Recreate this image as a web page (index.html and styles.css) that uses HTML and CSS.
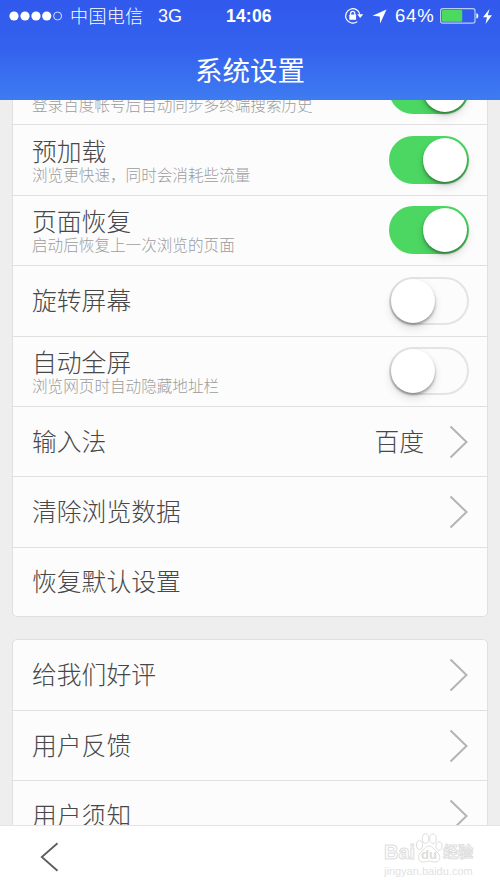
FILE: index.html
```html
<!DOCTYPE html>
<html lang="zh-CN">
<head>
<meta charset="utf-8">
<title>系统设置</title>
<link rel="stylesheet" href="styles.css">
</head>
<body>
<svg class="defs" aria-hidden="true">
  <symbol id="next" viewBox="0 0 20 34"><path d="M1.5 1.5 17.5 17 1.5 32.5" fill="none" stroke="#b4b4b4" stroke-width="2"/></symbol>
</svg>
<header class="header">
  <div class="status">
    <svg class="signal" width="54" height="12" viewBox="0 0 54 12" fill="#fff"><circle cx="5" cy="6" r="4.6"/><circle cx="16" cy="6" r="4.6"/><circle cx="27" cy="6" r="4.6"/><circle cx="37.7" cy="6" r="4.6"/><circle cx="48.6" cy="6" r="4" fill="none" stroke="#d5e0ff" stroke-width="1"/></svg>
    <span class="carrier">中国电信</span>
    <span class="network">3G</span>
    <span class="time">14:06</span>
    <svg class="lock" width="20" height="18" viewBox="0 0 20 18" fill="none" stroke="#fff"><path d="M13.3 14.6A7.2 7.2 0 1 1 15.9 7.5" stroke-width="1.2"/><path d="M13.2 7.3h6L16.2 11z" fill="#fff" stroke="none"/><path d="M6.6 8V6.5a2.1 2.1 0 0 1 4.2 0V8" stroke-width="1.2"/><rect x="5.3" y="7.6" width="6.8" height="5.2" rx=".6" fill="#fff" stroke="none"/></svg>
    <svg class="location" width="15" height="15" viewBox="0 0 15 15" fill="#fff"><path d="M14.5.5 8.2 14.5 7.7 7.4.5 6.8z"/></svg>
    <span class="percent">64%</span>
    <svg class="battery" width="39" height="16" viewBox="0 0 39 16"><rect x=".6" y=".6" width="34.4" height="14.6" rx="2.2" fill="none" stroke="#b9cbfb" stroke-width="1.2"/><rect x="2" y="2" width="20.2" height="11.8" rx="1" fill="#4cd95f"/><path d="M36.4 5.2c2.6.4 2.6 5 0 5.4z" fill="#fff"/></svg>
    <svg class="bolt" width="9" height="15" viewBox="0 0 9 15" fill="#fff"><path d="M6.5 0 0 8.3h4L2.5 15 9 6.3H4.8z"/></svg>
  </div>
  <h1 class="title">系统设置</h1>
</header>
<main class="content">
  <section class="card first">
    <div class="row"><div class="label sync"><small>登录百度帐号后自动同步多终端搜索历史</small></div><i class="switch on"></i></div>
    <div class="row"><div class="label"><b>预加载</b><small>浏览更快速，同时会消耗些流量</small></div><i class="switch on"></i></div>
    <div class="row"><div class="label"><b>页面恢复</b><small>启动后恢复上一次浏览的页面</small></div><i class="switch on"></i></div>
    <div class="row"><div class="label"><b>旋转屏幕</b></div><i class="switch"></i></div>
    <div class="row"><div class="label"><b>自动全屏</b><small>浏览网页时自动隐藏地址栏</small></div><i class="switch"></i></div>
    <div class="row"><div class="label"><b>输入法</b></div><span class="value">百度</span><svg class="next"><use href="#next"/></svg></div>
    <div class="row"><div class="label"><b>清除浏览数据</b></div><svg class="next"><use href="#next"/></svg></div>
    <div class="row"><div class="label"><b>恢复默认设置</b></div></div>
  </section>
  <section class="card">
    <div class="row"><div class="label"><b>给我们好评</b></div><svg class="next"><use href="#next"/></svg></div>
    <div class="row"><div class="label"><b>用户反馈</b></div><svg class="next"><use href="#next"/></svg></div>
    <div class="row"><div class="label"><b>用户须知</b></div><svg class="next"><use href="#next"/></svg></div>
  </section>
</main>
<footer class="toolbar">
  <svg width="19" height="30" viewBox="0 0 19 30" fill="none" stroke="#5c5c5c" stroke-width="1.8"><path d="M17.5 1.2 1.8 15 17.5 28.8"/></svg>
  <div class="watermark">
    <div class="brand"><span>Bai</span><svg width="28" height="31" viewBox="0 0 28 31" fill="#fff" stroke="#dedede"><ellipse cx="4.5" cy="12" rx="3" ry="4.4"/><ellipse cx="10.5" cy="5.5" rx="3.2" ry="4.8"/><ellipse cx="18" cy="5.7" rx="3.2" ry="4.8"/><ellipse cx="24" cy="13" rx="3" ry="4.2"/><path d="M14 13c-4 0-5 4-8 6-4 3-3 10 2 10 3 0 4-1 6-1s3 1 6 1c6 0 6-7 2-10-3-2-4-6-8-6z"/><text x="14" y="26" text-anchor="middle">du</text></svg><span class="cn">经验</span></div>
    <div class="site">jingyan.baidu.com</div>
  </div>
</footer>
</body>
</html>
```
FILE: styles.css
```css
* { box-sizing: border-box; }
body {
  margin: 0;
  width: 500px;
  height: 888px;
  display: flex;
  flex-direction: column;
  overflow: hidden;
  background: #eee;
  color: #484848;
  font-family: "Liberation Sans", "Noto Sans CJK SC", sans-serif;
}
.defs { display: none; }
.header {
  flex: none;
  height: 100px;
  background: linear-gradient(#3159ed, #3462ee 50%, #3e7bf1);
  color: #fff;
}
.status {
  display: flex;
  align-items: center;
  height: 32px;
  padding-left: 9px;
  font-size: 18px;
  line-height: 32px;
}
.status svg { flex: none; }
.carrier { width: 74px; margin-left: 7px; padding-top: 1px; white-space: nowrap; letter-spacing: .4px; font-weight: 300; }
.network { width: 68px; margin-left: 14px; }
.time { width: 46px; font-weight: bold; font-size: 17.5px; letter-spacing: .2px; }
.lock { margin-left: 72px; }
.location { margin-left: 8px; }
.percent { width: 41px; margin-left: 8px; letter-spacing: .8px; font-size: 18.5px; }
.battery { margin-left: 4px; }
.bolt { margin-left: 4px; }
.title {
  margin: 20px 0 0;
  text-align: center;
  font-size: 27.5px;
  line-height: 40px;
  font-weight: 400;
}
.content { flex: none; height: 725px; padding: 0 12px; overflow: hidden; }
.card {
  border: 1px solid #e0e0e0;
  border-radius: 5px;
  background: #fcfcfc;
}
.first { margin-top: -46px; margin-bottom: 22px; }
.row {
  display: flex;
  align-items: center;
  height: 70.4px;
  padding: 0 18px 0 19px;
  border-bottom: 1px solid #e0e0e0;
}
.row:last-child { border-bottom: 0; }
.first .row:last-child { height: 68.7px; }
.label { flex: 1; padding-top: 2px; }
.label.sync { padding-top: 32px; }
.label b, .label small { display: block; white-space: nowrap; }
.label b { font-size: 24.8px; line-height: 30px; font-weight: 300; }
.label small { font-size: 15.6px; line-height: 16px; color: #9c9c9c; font-weight: 300; }
.value { margin-right: 25px; padding-top: 2px; font-size: 24.8px; line-height: 30px; font-weight: 300; }
.next { width: 20px; height: 34px; }
.switch {
  width: 80px;
  height: 48px;
  padding: 1px;
  border: 2px solid #e4e4e4;
  border-radius: 24px;
}
.switch::before {
  content: "";
  display: block;
  width: 44px;
  height: 44px;
  margin-top: -1px;
  margin-left: -1px;
  border-radius: 50%;
  background: #fff;
  box-shadow: 0 2px 3px rgba(0,0,0,.35), 0 5px 10px rgba(0,0,0,.12);
}
.switch.on { background: #4cd762; border-color: #4cd762; }
.switch.on::before { margin-left: 31px; }
.toolbar {
  flex: none;
  height: 63px;
  display: flex;
  justify-content: space-between;
  padding: 16px 28px 0 40px;
  border-top: 1px solid #e4e4e4;
  background: #fff;
}
.watermark { width: 90px; margin-top: -8px; margin-right: -2px; color: #fff; }
.brand { display: flex; align-items: flex-end; height: 30px; font-size: 20px; line-height: 24px; font-weight: bold; -webkit-text-stroke: 1px #dedede; }
.brand svg { flex: none; }
.brand text { font-size: 13px; fill: #ddd; stroke: none; -webkit-text-stroke: 0; }
.cn { font-size: 15px; white-space: nowrap; }
.site { color: #e2e2e2; font-size: 11px; line-height: 14px; }
```
